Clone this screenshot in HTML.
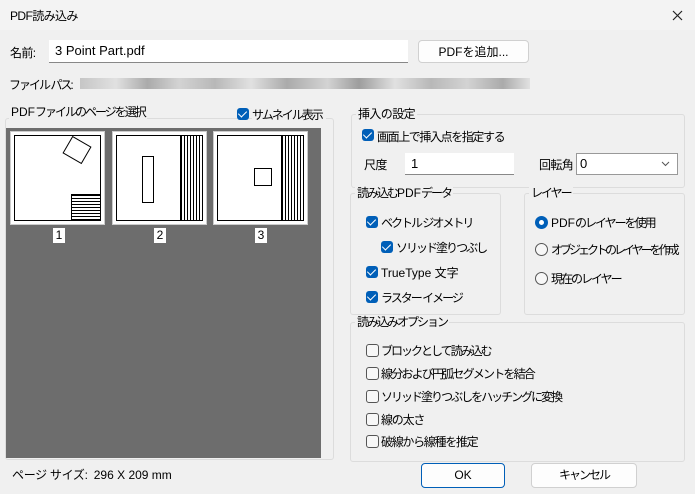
<html><head><style>
body{margin:0;width:695px;height:494px;background:#f0f0f0;font-family:"Liberation Sans","Noto Sans CJK JP",sans-serif;font-size:12px;color:#000;position:relative;overflow:hidden;letter-spacing:-0.6px}
.a{position:absolute;white-space:nowrap}
.k{letter-spacing:-2px}
.g{position:absolute;border:1px solid #dcdcdc;border-radius:3px}
.lg{position:absolute;background:#f0f0f0;padding:0 2px;line-height:14px}
.cb{position:absolute;width:12px;height:12px;border-radius:3px;background:#005fb8}
.cb:after{content:"";position:absolute;left:3px;top:1px;width:4px;height:7px;border:solid #fff;border-width:0 1.5px 1.5px 0;transform:rotate(45deg)}
.ub{position:absolute;width:11px;height:11px;border-radius:3px;border:1px solid #555;background:#f7f7f7}
.rd{position:absolute;width:11px;height:11px;border-radius:50%;border:1px solid #555;background:#f7f7f7}
.inp{position:absolute;background:#fff;border-bottom:1px solid #888;box-sizing:border-box;padding-left:6px;line-height:22px;letter-spacing:0}
.btn{position:absolute;background:#fdfdfd;border:1px solid #d0d0d0;border-radius:4px;box-sizing:border-box;text-align:center;line-height:22px}
.th{position:absolute;background:#fff;border:1px solid #ccc;width:93px;height:92px}
.th div{position:absolute;border:1px solid #000}
.num{position:absolute;background:#fff;width:12px;height:15px;text-align:center;line-height:15px;font-size:12px;letter-spacing:0}
.l{letter-spacing:0}
</style></head><body>
<div class="a" style="left:0;top:0;width:695px;height:30px;background:#f3f3f3"></div>
<div class="a" style="left:10px;top:7px">PDF読み込み</div>
<svg class="a" style="left:672px;top:10px" width="11" height="11"><path d="M1 1L10 10M10 1L1 10" stroke="#222" stroke-width="1.2"/></svg>
<div class="a" style="left:10px;top:44px">名前:</div>
<div class="inp" style="left:49px;top:40px;width:359px;height:23px;font-size:13px">3 Point Part.pdf</div>
<div class="btn" style="left:418px;top:40px;width:111px;height:23px;letter-spacing:0">PDFを追加...</div>
<div class="a k" style="left:9px;top:76px">ファイル パス:</div>
<div class="a" style="left:80px;top:78px;width:450px;height:11px;background:linear-gradient(90deg,#bbb,#ddd 8%,#999 15%,#ccc 22%,#aaa 30%,#ddd 38%,#999 46%,#ccc 55%,#888 62%,#ddd 70%,#aaa 78%,#ccc 86%,#999 94%,#ddd);opacity:.8"></div>
<div class="g" style="left:5px;top:118px;width:327px;height:340px"></div>
<div class="lg k" style="left:9px;top:105px"><span class="l">PDF</span>ファイルのページを選択</div>
<div class="cb" style="left:237px;top:108px"></div>
<div class="a k" style="left:252px;top:106px;background:#f0f0f0;padding-right:4px">サムネイル表示</div>
<div class="a" style="left:6px;top:128px;width:315px;height:330px;background:#6d6d6d"></div>
<div class="th" style="left:10px;top:131px"><div style="left:3px;top:3px;width:85px;height:84px"></div><div style="left:60px;top:62px;width:28px;height:25px;background:repeating-linear-gradient(#000 0 1px,#fff 1px 3px)"></div><div style="left:55px;top:8px;width:20px;height:18px;transform:rotate(30deg)"></div></div>
<div class="th" style="left:112px;top:131px"><div style="left:3px;top:3px;width:85px;height:84px"></div><div style="left:67px;top:3px;width:21px;height:84px;background:repeating-linear-gradient(90deg,#000 0 1px,#fff 1px 3px)"></div><div style="left:29px;top:24px;width:10px;height:45px"></div></div>
<div class="th" style="left:213px;top:131px"><div style="left:3px;top:3px;width:85px;height:84px"></div><div style="left:67px;top:3px;width:21px;height:84px;background:repeating-linear-gradient(90deg,#000 0 1px,#fff 1px 3px)"></div><div style="left:40px;top:36px;width:16px;height:16px"></div></div>
<div class="num" style="left:53px;top:228px">1</div>
<div class="num" style="left:154px;top:228px">2</div>
<div class="num" style="left:255px;top:228px">3</div>
<div class="a" style="left:12px;top:466px;letter-spacing:-0.3px">ページ サイズ:&nbsp; <span class="l">296 X 209 mm</span></div>

<div class="g" style="left:351px;top:114px;width:332px;height:72px"></div>
<div class="lg" style="left:356px;top:107px">挿入の設定</div>
<div class="cb" style="left:362px;top:129px"></div>
<div class="a" style="left:377px;top:128px;letter-spacing:-1.4px">画面上で挿入点を指定する</div>
<div class="a" style="left:364px;top:156px">尺度</div>
<div class="inp" style="left:405px;top:153px;width:109px;height:22px;font-size:13px">1</div>
<div class="a" style="left:539px;top:156px">回転角</div>
<div class="inp" style="left:576px;top:153px;width:102px;height:22px;border:1px solid #999;font-size:13px;padding-left:3px;line-height:20px">0<svg style="position:absolute;right:7px;top:7px" width="9" height="6"><path d="M1 1L4.5 4.5L8 1" stroke="#555" fill="none"/></svg></div>

<div class="g" style="left:350px;top:193px;width:149px;height:120px"></div>
<div class="lg k" style="left:355px;top:186px">読み込む<span class="l">PDF</span>データ</div>
<div class="cb" style="left:366px;top:216px"></div><div class="a k" style="left:381px;top:214px">ベクトル ジオメトリ</div>
<div class="cb" style="left:381px;top:241px"></div><div class="a k" style="left:396px;top:239px">ソリッド塗りつぶし</div>
<div class="cb" style="left:366px;top:266px"></div><div class="a l" style="left:381px;top:264px">TrueType 文字</div>
<div class="cb" style="left:366px;top:291px"></div><div class="a k" style="left:381px;top:289px">ラスター イメージ</div>

<div class="g" style="left:524px;top:193px;width:159px;height:120px"></div>
<div class="lg k" style="left:529px;top:186px">レイヤー</div>
<div class="rd" style="left:535px;top:216px;border:4px solid #005fb8;width:5px;height:5px;background:#fff"></div><div class="a k" style="left:551px;top:214px"><span class="l">PDF</span>のレイヤーを使用</div>
<div class="rd" style="left:535px;top:243px"></div><div class="a" style="left:551px;top:241px;letter-spacing:-3px">オブジェクトのレイヤーを作成</div>
<div class="rd" style="left:535px;top:272px"></div><div class="a k" style="left:551px;top:270px">現在のレイヤー</div>

<div class="g" style="left:350px;top:322px;width:333px;height:138px"></div>
<div class="lg k" style="left:355px;top:315px">読み込みオプション</div>
<div class="ub" style="left:366px;top:344px"></div><div class="a k" style="left:381px;top:342px">ブロックとして読み込む</div>
<div class="ub" style="left:366px;top:367px"></div><div class="a" style="left:381px;top:365px;letter-spacing:-1.8px">線分および円弧セグメントを結合</div>
<div class="ub" style="left:366px;top:390px"></div><div class="a k" style="left:381px;top:388px">ソリッド塗りつぶしをハッチングに変換</div>
<div class="ub" style="left:366px;top:413px"></div><div class="a" style="left:381px;top:411px;letter-spacing:-1.2px">線の太さ</div>
<div class="ub" style="left:366px;top:435px"></div><div class="a" style="left:381px;top:433px;letter-spacing:-1.3px">破線から線種を推定</div>

<div class="btn" style="left:421px;top:463px;width:84px;height:25px;border:1px solid #005fb8;line-height:23px;letter-spacing:0">OK</div>
<div class="btn k" style="left:531px;top:463px;width:106px;height:25px;line-height:23px">キャンセル</div>
</body></html>
